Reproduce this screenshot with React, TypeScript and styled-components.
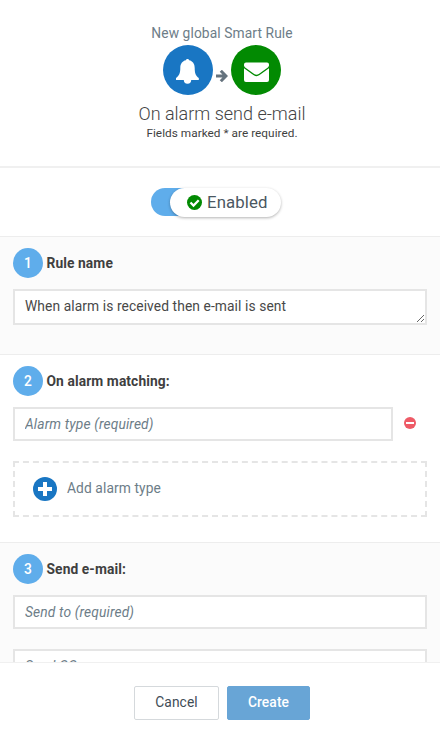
import React from "react";
import styled, { createGlobalStyle } from "styled-components";

const GlobalStyle = createGlobalStyle`
  *, *::before, *::after { box-sizing: border-box; }
  body {
    margin: 0;
    background: #fff;
    color: #3f3f3f;
    font: 13.8px/20px Roboto, "Liberation Sans", sans-serif;
    letter-spacing: 0.09px;
  }
`;

const Dialog = styled.div`
  display: flex;
  flex-direction: column;
  width: 440px;
  height: 732px;
  overflow: hidden;
`;

const Header = styled.header`
  display: flex;
  flex-direction: column;
  align-items: center;
  flex: none;
  height: 168px;
  padding: 23px 0 0 4px;
  border-bottom: 2px solid #f0f0f0;
`;

const Subtitle = styled.div`
  height: 22px;
  color: #6d7d88;
`;

const Flow = styled.div`
  display: flex;
  align-items: center;
  gap: 3px;
  height: 50px;
`;

const Disc = styled.div<{ $color: string }>`
  display: flex;
  width: 50px;
  height: 50px;
  border-radius: 50%;
  background: ${(p) => p.$color};
`;

const Arrow = styled.svg`
  margin-top: 11px;
`;

const Title = styled.h1`
  margin: 7px 0 0;
  color: #444;
  font-size: 18px;
  font-weight: 300;
  line-height: 24px;
  letter-spacing: 0;
`;

const Hint = styled.div`
  margin-top: -1px;
  font-size: 11.8px;
  line-height: 16px;
  letter-spacing: 0.03px;
`;

const ToggleBar = styled.div`
  display: flex;
  flex: none;
  justify-content: center;
  height: 68px;
  padding: 20px 8px 0 0;
`;

const Track = styled.div`
  width: 130px;
  height: 28px;
  padding-left: 19px;
  border-radius: 14px;
  background: linear-gradient(90deg, #5fadeb 50%, transparent 50%);
`;

const Knob = styled.div`
  display: flex;
  align-items: center;
  gap: 5px;
  width: 111px;
  height: 29px;
  padding-left: 17px;
  border-radius: 15px;
  background: #fff;
  box-shadow: 0 1px 3px rgba(0, 0, 0, 0.3);
  color: #4a5761;
  font-size: 16.8px;
`;

const KnobLabel = styled.span`
  padding-bottom: 2px;
`;

const Section = styled.section<{ $height: number; $shaded?: boolean }>`
  flex: none;
  height: ${(p) => p.$height}px;
  padding: 11px 13px 0;
  overflow: hidden;
  border-top: 1px solid #ededed;
  background: ${(p) => (p.$shaded ? "#fbfbfb" : "#fff")};
`;

const Heading = styled.h2`
  display: flex;
  align-items: center;
  gap: 3.5px;
  height: 30px;
  margin: 0 0 11px;
  font-size: 13.8px;
  font-weight: 700;
`;

const Step = styled.span`
  width: 30px;
  height: 30px;
  border-radius: 50%;
  background: #5fadeb;
  color: #fff;
  font-weight: 500;
  line-height: 30px;
  text-align: center;
`;

const field = `
  display: block;
  width: 100%;
  margin: 0;
  padding: 5px 10px;
  border: 2px solid #e5e5e5;
  border-radius: 0;
  outline: none;
  background: #fff;
  color: #484848;
  font: 13.8px/20px Roboto, "Liberation Sans", sans-serif;
  letter-spacing: 0.09px;
`;

const NameArea = styled.textarea`
  ${field}
  height: 36px;
  overflow: hidden;
  resize: vertical;
`;

const TextInput = styled.input`
  ${field}
  height: 34px;
  & + & { margin-top: 20px; }
  &::placeholder {
    color: #6d7d88;
    font-style: italic;
    letter-spacing: 0.14px;
    opacity: 1;
  }
`;

const MatchRow = styled.div`
  display: flex;
  align-items: center;
  gap: 11px;
  padding-right: 11px;
`;

const IconButton = styled.button`
  display: flex;
  flex: none;
  width: 12px;
  margin-bottom: 2px;
  padding: 0;
  border: 0;
  background: none;
`;

const AddButton = styled.button`
  display: flex;
  align-items: center;
  gap: 10px;
  width: 100%;
  height: 56px;
  margin-top: 20px;
  padding: 0 18px;
  border: 2px dashed #e5e5e5;
  background: transparent;
  color: #6d7d88;
  font: 13.8px/20px Roboto, "Liberation Sans", sans-serif;
  letter-spacing: 0.09px;
`;

const AddLabel = styled.span`
  padding-bottom: 2px;
`;

const Footer = styled.footer`
  display: flex;
  flex: none;
  justify-content: center;
  gap: 8px;
  height: 70px;
  padding: 23px 0 0 4px;
  border-top: 1px solid #f0f0f0;
`;

const Button = styled.button<{ $primary?: boolean }>`
  width: ${(p) => (p.$primary ? 83 : 85)}px;
  height: 34px;
  padding: 0 0 2px;
  border: 1px solid ${(p) => (p.$primary ? "#68a5d6" : "#d5d9dc")};
  border-radius: 2px;
  background: ${(p) => (p.$primary ? "#68a5d6" : "#fff")};
  color: ${(p) => (p.$primary ? "#fff" : "#3f4c56")};
  font: ${(p) => (p.$primary ? 500 : 400)} 13.8px/20px Roboto, "Liberation Sans", sans-serif;
  letter-spacing: 0.09px;
`;

const BellIcon = () => (
  <svg width="50" height="50" viewBox="0 0 50 50" fill="#fff">
    <path d="M24.500 14c1 0 1.500.6 1.600 1.300 3.600.7 5.600 3.500 5.600 7.800 0 5.200 1.100 8.100 4.100 10v1.900H28.200a3.700 3.700 0 0 1-7.400 0H13v-1.900c3-1.900 4.300-4.800 4.300-10 0-4.300 2-7.100 5.600-7.800.1-.7.6-1.300 1.600-1.300z" />
  </svg>
);

const MailIcon = () => (
  <svg width="50" height="50" viewBox="0 0 50 50" fill="#fff">
    <path d="M13 19.500a2 2 0 0 1 2-2h21a2 2 0 0 1 2 2v.8c0 1-.6 1.800-1.500 2.500l-8.700 6.100c-1.600 1.100-3 1.100-4.600 0l-8.700-6.100c-.9-.7-1.500-1.500-1.500-2.500z" />
    <path d="M13 23.300l9.400 6.700c2.100 1.500 4.100 1.500 6.200 0l9.400-6.700V35a2 2 0 0 1-2 2H15a2 2 0 0 1-2-2z" />
  </svg>
);

export default function App() {
  return (
    <>
      <GlobalStyle />
      <Dialog>
        <Header>
          <Subtitle>New global Smart Rule</Subtitle>
          <Flow>
            <Disc $color="#1976c3"><BellIcon /></Disc>
            <Arrow width="12" height="12" viewBox="0 0 12 12" fill="none" stroke="#65737e" strokeWidth="3">
              <path d="M0 6H10M4.800 .8L10 6L4.800 11.200" />
            </Arrow>
            <Disc $color="#028a02"><MailIcon /></Disc>
          </Flow>
          <Title>On alarm send e-mail</Title>
          <Hint>Fields marked * are required.</Hint>
        </Header>
        <ToggleBar>
          <Track>
            <Knob>
              <svg width="15" height="15" viewBox="0 0 15 15">
                <circle cx="7.500" cy="7.500" r="7.500" fill="#028a02" />
                <path d="M3.500 7.500l3 3 5.200-5.200" fill="none" stroke="#fff" strokeWidth="2.300" />
              </svg>
              <KnobLabel>Enabled</KnobLabel>
            </Knob>
          </Track>
        </ToggleBar>
        <Section $height={118} $shaded>
          <Heading><Step>1</Step>Rule name</Heading>
          <NameArea rows={1} defaultValue="When alarm is received then e-mail is sent" />
        </Section>
        <Section $height={188}>
          <Heading><Step>2</Step>On alarm matching:</Heading>
          <MatchRow>
            <TextInput placeholder="Alarm type (required)" />
            <IconButton aria-label="Remove">
              <svg width="12" height="12" viewBox="0 0 12 12">
                <circle cx="6" cy="6" r="6" fill="#ee5a66" />
                <path d="M2 5h8v2H2z" fill="#fff" />
              </svg>
            </IconButton>
          </MatchRow>
          <AddButton>
            <svg width="24" height="24" viewBox="0 0 24 24">
              <circle cx="12" cy="12" r="12" fill="#1976c3" />
              <path d="M12 5v14M5 12h14" stroke="#fff" strokeWidth="4" />
            </svg>
            <AddLabel>Add alarm type</AddLabel>
          </AddButton>
        </Section>
        <Section $height={120} $shaded>
          <Heading><Step>3</Step>Send e-mail:</Heading>
          <TextInput placeholder="Send to (required)" />
          <TextInput placeholder="Send CC" />
        </Section>
        <Footer>
          <Button>Cancel</Button>
          <Button $primary>Create</Button>
        </Footer>
      </Dialog>
    </>
  );
}
